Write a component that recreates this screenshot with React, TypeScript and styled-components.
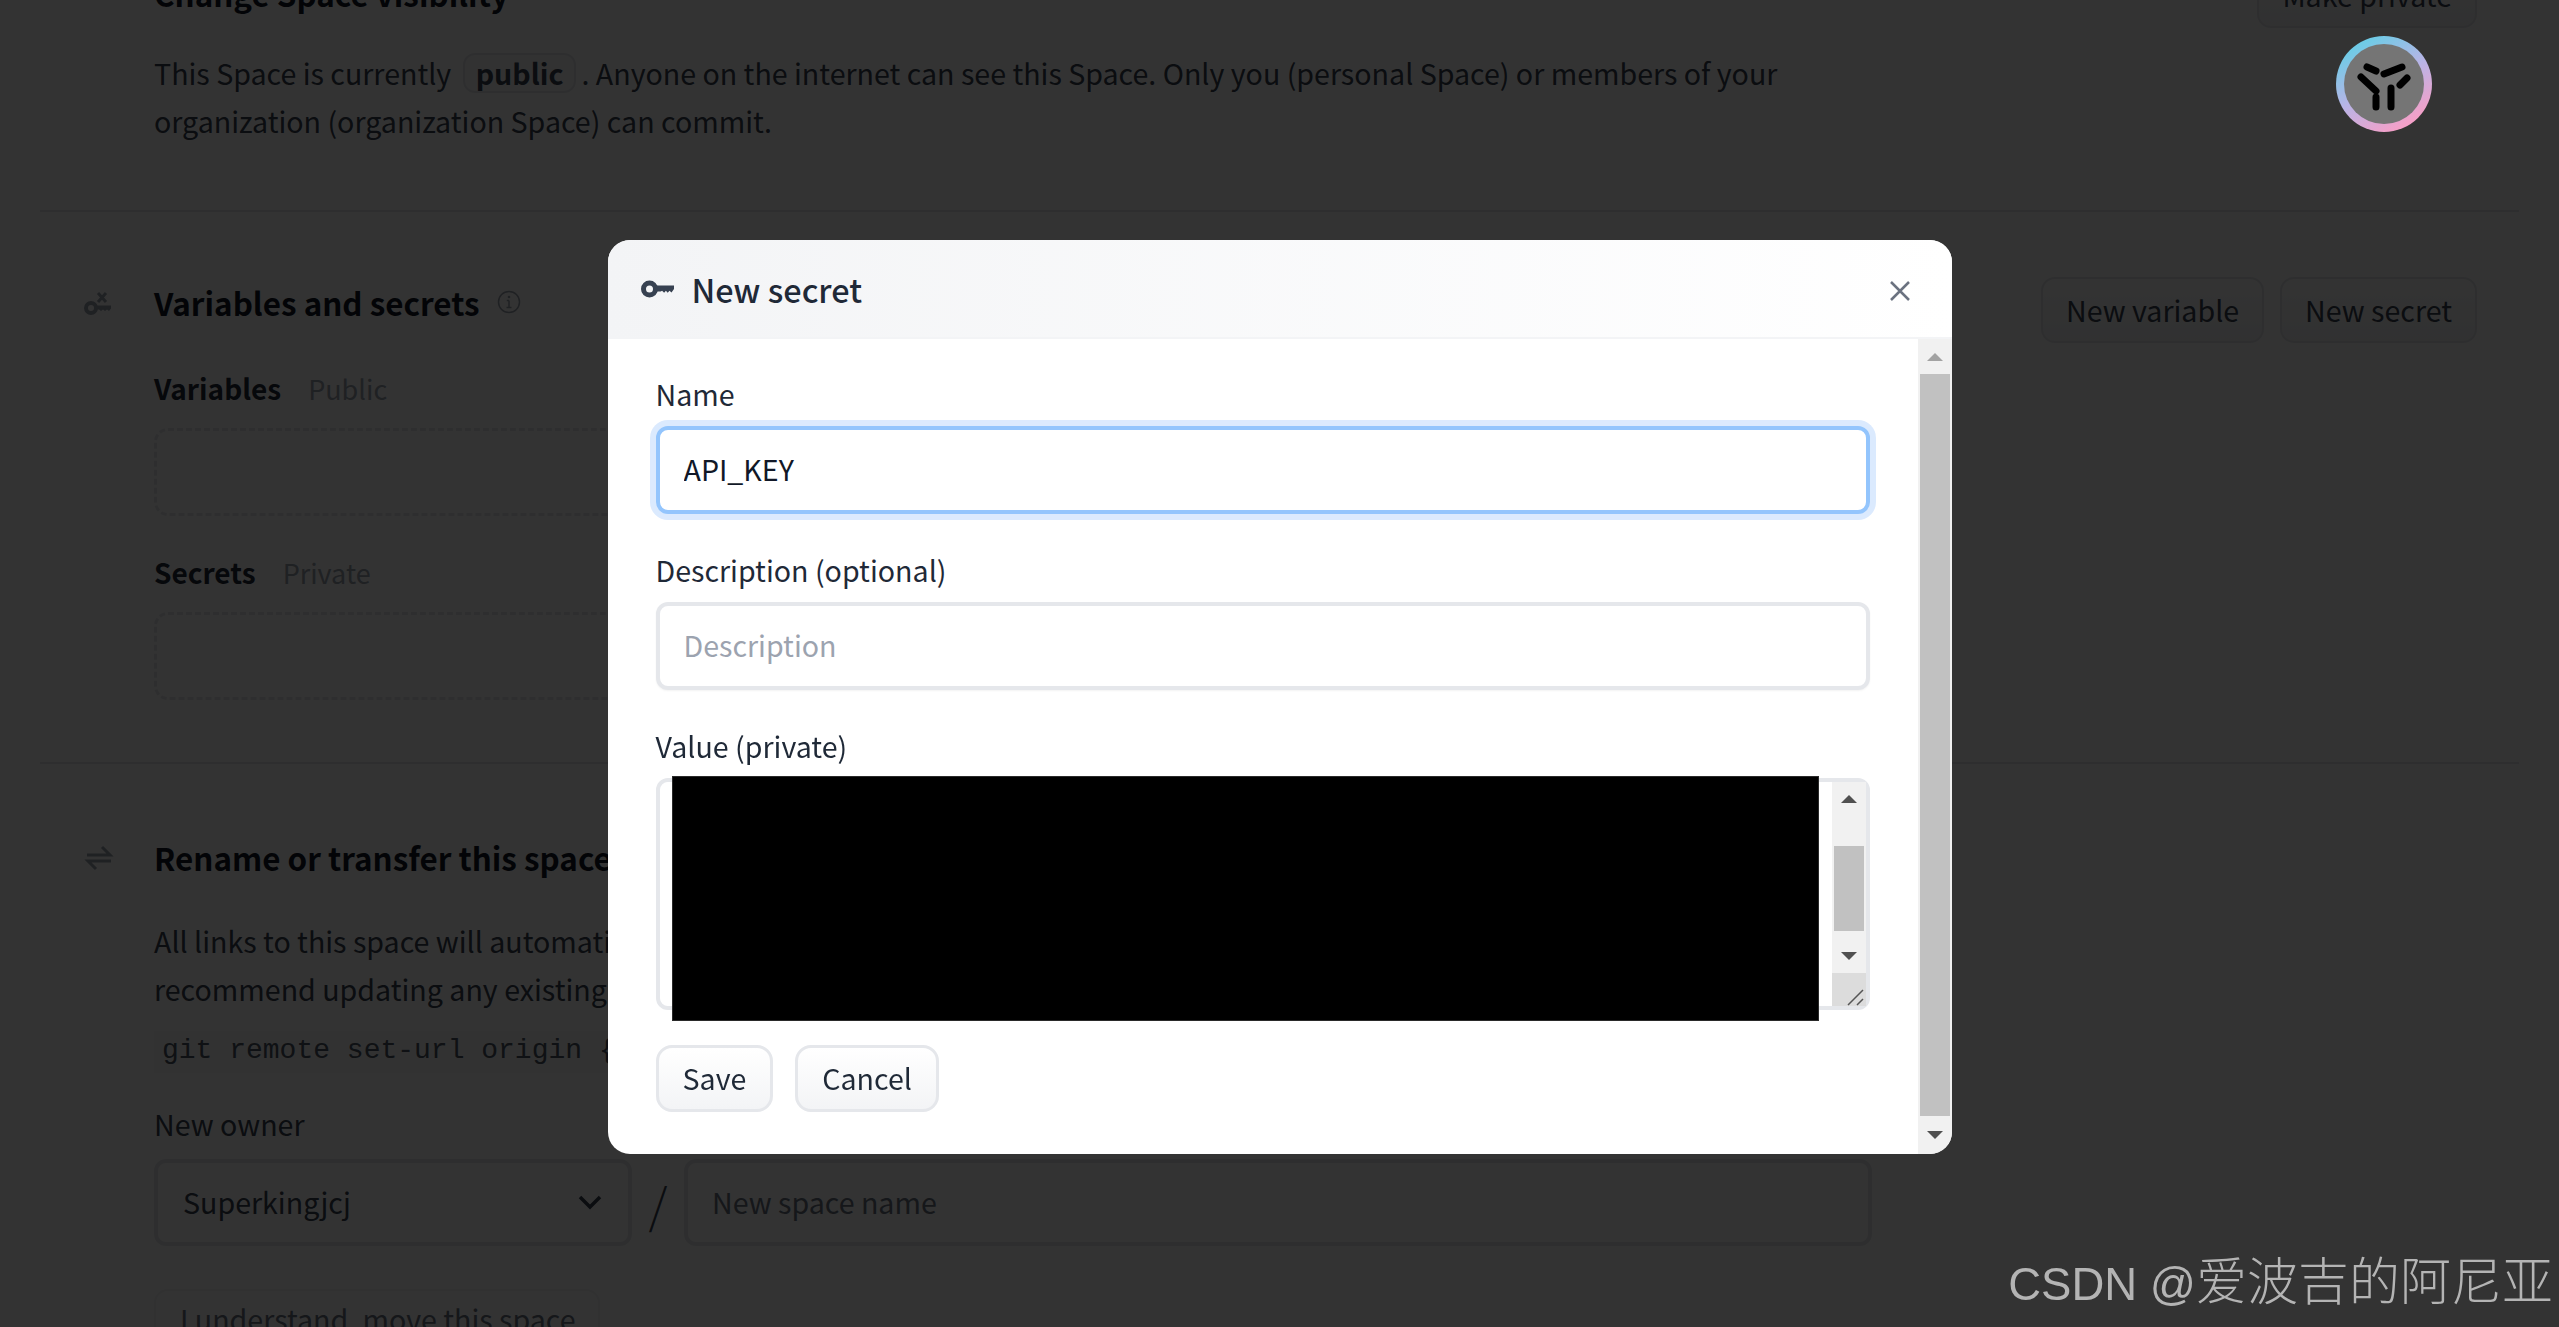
import React from 'react'
import styled, { createGlobalStyle } from 'styled-components'

const SANS = `"Noto Sans CJK SC", "Noto Sans", sans-serif`

const GlobalStyle = createGlobalStyle`
  html, body {
    margin: 0;
    padding: 0;
    height: 100%;
    overflow: hidden;
    background: #ffffff;
    font-family: ${SANS};
  }
  * { box-sizing: border-box; }
`

const KeyIcon = () => (
  <KeySvg viewBox="0 0 33 20">
    <circle cx="8.500" cy="10" r="6" fill="none" stroke="currentColor" strokeWidth="5" />
    <path d="M14 6.500h19v3.500l-2.500 3.500-2-1.800-1.800 2-1.800-2-1.800 2-2-2-1.500.8H14z" fill="currentColor" />
  </KeySvg>
)

const App: React.FC = () => {
  return (
    <>
      <GlobalStyle />
      <Page>
        <Section $height={212}>
          <SectionIcon />
          <SectionMain>
            <TopHeading>Change Space visibility</TopHeading>
            <Paragraph>
              This Space is currently <Pill>public</Pill>. Anyone on the internet can see this Space. Only you (personal
              Space) or members of your organization (organization Space) can commit.
            </Paragraph>
          </SectionMain>
          <TopAction>
            <GhostButton>Make private</GhostButton>
          </TopAction>
        </Section>

        <Section $height={552}>
          <SectionIcon>
            <svg width="27" height="24" viewBox="0 0 27 24" fill="none">
              <circle cx="7" cy="16" r="5" stroke="currentColor" strokeWidth="4" />
              <path d="M12 13.500h15v3l-2 2.500-2-1.500-2 1.500-2-1.500-2 1.500-2-1.500-3 0z" fill="currentColor" />
              <path d="M14 1l8 9M22 1l-8 9" stroke="currentColor" strokeWidth="3" />
            </svg>
          </SectionIcon>
          <SectionMain>
            <HeadingRow>
              <Heading>Variables and secrets</Heading>
              <InfoIcon viewBox="0 0 24 24" fill="none">
                <circle cx="12" cy="12" r="10.500" stroke="currentColor" strokeWidth="1.500" />
                <path d="M12 10.500v7M9.500 17.500h5M9.800 10.500H12" stroke="currentColor" strokeWidth="1.500" />
                <circle cx="12" cy="7" r="1.300" fill="currentColor" />
              </InfoIcon>
            </HeadingRow>
            <SubRow>
              <SubTitle>Variables</SubTitle>
              <SubHint>Public</SubHint>
            </SubRow>
            <DashedBox />
            <SubRow $second>
              <SubTitle>Secrets</SubTitle>
              <SubHint>Private</SubHint>
            </SubRow>
            <DashedBox />
          </SectionMain>
          <SectionActions>
            <GhostButton>New variable</GhostButton>
            <GhostButton>New secret</GhostButton>
          </SectionActions>
        </Section>

        <Section $height={600} $plain>
          <SectionIcon>
            <svg width="30" height="28" viewBox="0 0 30 28" fill="none" stroke="currentColor" strokeWidth="3">
              <path d="M3 11h23L18 3M27 17H4l8 8" />
            </svg>
          </SectionIcon>
          <SectionMain>
            <RenameHeading>Rename or transfer this space</RenameHeading>
            <Paragraph $spaced>
              All links to this space will automatically redirect to the new location, including git operations. However, we
              <br />
              recommend updating any existing local clones to point to the new repository URL. To do so, you can use the
              following command:
            </Paragraph>
            <CodeLine>git remote set-url origin {'{NEW_URL}'}</CodeLine>
            <OwnerLabel>New owner</OwnerLabel>
            <OwnerRow>
              <OwnerSelect>
                <span>Superkingjcj</span>
                <svg width="26" height="16" viewBox="0 0 26 16" fill="none" stroke="currentColor" strokeWidth="3.500">
                  <path d="M3 3l10 10L23 3" />
                </svg>
              </OwnerSelect>
              <Slash>/</Slash>
              <SpaceNameInput placeholder="New space name" readOnly />
            </OwnerRow>
            <MoveButton>I understand, move this space</MoveButton>
          </SectionMain>
        </Section>
      </Page>

      <Overlay>
        <Dialog>
          <DialogHeader>
            <DialogTitle>
              <KeyIcon />
              New secret
            </DialogTitle>
            <CloseButton aria-label="Close">
              <svg width="20" height="20" viewBox="0 0 20 20" fill="none" stroke="currentColor" strokeWidth="2.500">
                <path d="M1 1l18 18M19 1L1 19" />
              </svg>
            </CloseButton>
          </DialogHeader>
          <DialogBody>
            <Form>
              <Field>
                <FieldLabel>Name</FieldLabel>
                <TextInput $focused defaultValue="API_KEY" />
              </Field>
              <Field>
                <FieldLabel>Description (optional)</FieldLabel>
                <TextInput placeholder="Description" />
              </Field>
              <Field>
                <FieldLabel>Value (private)</FieldLabel>
                <TextareaBox>
                  <ValueArea readOnly />
                  <TextareaScroll>
                    <ArrowSlot>
                      <ArrowUp />
                    </ArrowSlot>
                    <TextareaThumb />
                    <ArrowSlot>
                      <ArrowDown />
                    </ArrowSlot>
                    <Resizer>
                      <svg width="18" height="18" viewBox="0 0 18 18" stroke="#555" strokeWidth="1.500">
                        <path d="M1 17L16 2M10 17l6-6" />
                      </svg>
                    </Resizer>
                  </TextareaScroll>
                  <Redaction />
                </TextareaBox>
              </Field>
              <Actions>
                <DialogButton>Save</DialogButton>
                <DialogButton>Cancel</DialogButton>
              </Actions>
            </Form>
            <DialogScroll>
              <ArrowSlot $top>
                <ArrowUp $muted />
              </ArrowSlot>
              <DialogThumb />
              <ArrowSlot $grow>
                <ArrowDown />
              </ArrowSlot>
            </DialogScroll>
          </DialogBody>
        </Dialog>
      </Overlay>

      <Avatar>
        <AvatarInner>
          <svg width="80" height="80" viewBox="8 8 80 80" fill="none" stroke="#000" strokeWidth="7" strokeLinecap="round">
            <path d="M31 31l9 4M48 38l18-7M64 49l7-7M25 41l15 14M40 61v10M55 52v19" />
          </svg>
        </AvatarInner>
      </Avatar>

      <Watermark>
        CSDN @<WatermarkCjk>爱波吉的阿尼亚</WatermarkCjk>
      </Watermark>
    </>
  )
}

export default App

const Page = styled.div`
  height: 1327px;
  overflow: hidden;
  padding: 0 40px;
  color: #374151;
`

const Section = styled.section<{ $height: number; $plain?: boolean }>`
  height: ${p => p.$height}px;
  display: flex;
  border-bottom: ${p => (p.$plain ? 'none' : '2px solid #e5e7eb')};
`

const SectionIcon = styled.div`
  width: 114px;
  flex: none;
  padding: 80px 0 0 44px;
  color: #9ca3af;
`

const SectionMain = styled.div`
  width: 1718px;
  flex: none;
`

const TopHeading = styled.h2`
  margin: -22px 0 0;
  height: 32px;
  font-size: 31.400px;
  line-height: 32px;
  font-weight: 700;
  color: #111827;
`

const Paragraph = styled.p<{ $spaced?: boolean }>`
  margin: ${p => (p.$spaced ? '35px 0 0' : '39px 0 0')};
  font-size: 28.600px;
  line-height: 48px;
  color: #374151;
`

const Pill = styled.span`
  display: inline-block;
  margin: 0 5px;
  padding: 0 11px;
  height: 40px;
  line-height: 36px;
  border-radius: 12px;
  border: 2px solid #e5e7eb;
  background: #f9fafb;
  font-weight: 700;
  color: #374151;
`

const TopAction = styled.div`
  margin-left: auto;
  margin-right: 42px;
  margin-top: -38px;
`

const GhostButton = styled.div`
  height: 66px;
  padding: 0 23px 2px;
  display: flex;
  align-items: center;
  font-size: 28.600px;
  color: #374151;
  background: linear-gradient(#ffffff, #f3f4f6);
  border: 2px solid #e5e7eb;
  border-radius: 14px;
`

const SectionActions = styled.div`
  margin-left: auto;
  margin-right: 42px;
  margin-top: 65px;
  display: flex;
  gap: 16px;
  align-items: flex-start;
`

const HeadingRow = styled.div`
  margin-top: 66px;
  height: 48px;
  display: flex;
  align-items: center;
  gap: 17px;
`

const Heading = styled.h2`
  margin: 0;
  font-size: 31.400px;
  font-weight: 700;
  color: #111827;
`

const RenameHeading = styled(Heading)`
  margin-top: 70px;
  line-height: 48px;
`

const InfoIcon = styled.svg`
  width: 24px;
  height: 24px;
  color: #9ca3af;
`

const SubRow = styled.div<{ $second?: boolean }>`
  margin-top: ${p => (p.$second ? '35px' : '41px')};
  height: 42px;
  display: flex;
  align-items: center;
  gap: 27px;
`

const SubTitle = styled.span`
  font-size: 28px;
  font-weight: 700;
  color: #1f2937;
`

const SubHint = styled.span`
  font-size: 27px;
  color: #9ca3af;
`

const DashedBox = styled.div`
  margin-top: 19px;
  height: 88px;
  border: 3px dashed #e5e7eb;
  border-radius: 14px;
`

const CodeLine = styled.div`
  margin-top: 18px;
  height: 42px;
  line-height: 40px;
  padding-left: 8px;
  font-family: "Liberation Mono", monospace;
  font-size: 28px;
  color: #4b5563;
  background: #f9fafb;
`

const OwnerLabel = styled.div`
  margin-top: 26px;
  height: 50px;
  line-height: 50px;
  font-size: 28.600px;
  color: #374151;
`

const OwnerRow = styled.div`
  margin-top: 10px;
  display: flex;
  align-items: center;
`

const OwnerSelect = styled.div`
  width: 478px;
  height: 87px;
  padding: 0 25px 2px;
  display: flex;
  align-items: center;
  justify-content: space-between;
  font-size: 28.600px;
  color: #374151;
  background: #ffffff;
  border: 4px solid #e5e7eb;
  border-radius: 12px;
`

const Slash = styled.div`
  width: 52px;
  text-align: center;
  font-size: 48px;
  font-weight: 300;
  color: #374151;
`

const SpaceNameInput = styled.input`
  flex: 1;
  height: 87px;
  padding: 0 24px 3px;
  font-family: ${SANS};
  font-size: 28.600px;
  background: #ffffff;
  border: 4px solid #e5e7eb;
  border-radius: 12px;
  outline: none;
  &::placeholder { color: #6b7280; }
`

const MoveButton = styled.div`
  margin-top: 43px;
  width: 446px;
  height: 70px;
  padding-left: 24px;
  line-height: 56px;
  font-size: 28.600px;
  white-space: nowrap;
  color: #6b7280;
  border: 2px solid #f3f4f6;
  border-radius: 14px;
`

const Overlay = styled.div`
  position: fixed;
  inset: 0;
  display: flex;
  justify-content: center;
  align-items: flex-start;
  padding-top: 240px;
  background: rgba(0, 0, 0, 0.8);
`

const Dialog = styled.div`
  width: 1344px;
  height: 914px;
  display: flex;
  flex-direction: column;
  background: #ffffff;
  border-radius: 22px;
  overflow: hidden;
`

const DialogHeader = styled.div`
  height: 99px;
  flex: none;
  padding: 0 30px 0 33px;
  display: flex;
  align-items: center;
  justify-content: space-between;
  background: linear-gradient(to right, #f3f4f6, #ffffff);
  border-bottom: 2px solid #f3f4f6;
`

const DialogTitle = styled.h3`
  margin: 0;
  display: flex;
  align-items: center;
  gap: 18px;
  font-size: 32.400px;
  font-weight: 500;
  color: #1f2937;
`

const KeySvg = styled.svg`
  width: 33px;
  height: 20px;
  color: #374151;
`

const CloseButton = styled.button`
  margin-right: 12px;
  margin-top: 4px;
  padding: 0;
  display: flex;
  border: none;
  background: none;
  color: #6b7280;
`

const DialogBody = styled.div`
  flex: 1;
  min-height: 0;
  display: flex;
`

const Form = styled.div`
  flex: 1;
  padding: 34px 48px 0 48px;
`

const Field = styled.div`
  margin-bottom: 35px;
  &:last-of-type {
    margin-bottom: 32px;
  }
`

const FieldLabel = styled.label`
  display: block;
  height: 42px;
  line-height: 42px;
  margin-bottom: 11px;
  font-size: 28.600px;
  color: #1f2937;
`

const TextInput = styled.input<{ $focused?: boolean }>`
  display: block;
  width: 100%;
  height: 88px;
  padding: 0 24px 3px;
  font-family: ${SANS};
  font-size: 28.600px;
  color: #111827;
  background: #ffffff;
  border: 4px solid ${p => (p.$focused ? '#93c5fd' : '#e5e7eb')};
  border-radius: 12px;
  outline: none;
  box-shadow: ${p => (p.$focused ? '0 0 0 6px #dbeafe' : '0 1px 2px rgba(0, 0, 0, 0.05)')};
  &::placeholder { color: #9ca3af; }
`

const TextareaBox = styled.div`
  position: relative;
  height: 232px;
  display: flex;
  border: 4px solid #e5e7eb;
  border-radius: 12px;
  overflow: visible;
`

const ValueArea = styled.textarea`
  flex: 1;
  border: none;
  outline: none;
  resize: none;
  background: #ffffff;
  border-radius: 10px 0 0 10px;
`

const TextareaScroll = styled.div`
  width: 34px;
  flex: none;
  display: flex;
  flex-direction: column;
  align-items: center;
  background: #f1f1f1;
`

const ArrowSlot = styled.div<{ $top?: boolean; $grow?: boolean }>`
  width: 100%;
  height: ${p => (p.$top ? '35px' : '34px')};
  flex: ${p => (p.$grow ? '1' : 'none')};
  display: flex;
  align-items: center;
  justify-content: center;
`

const ArrowUp = styled.div<{ $muted?: boolean }>`
  width: 0;
  height: 0;
  border-left: 8px solid transparent;
  border-right: 8px solid transparent;
  border-bottom: 8px solid ${p => (p.$muted ? '#a3a3a3' : '#505050')};
`

const ArrowDown = styled.div`
  width: 0;
  height: 0;
  border-left: 8px solid transparent;
  border-right: 8px solid transparent;
  border-top: 8px solid #505050;
`

const TextareaThumb = styled.div`
  width: 30px;
  height: 85px;
  margin-top: 30px;
  margin-bottom: 8px;
  background: #c1c1c1;
`

const Resizer = styled.div`
  width: 100%;
  flex: 1;
  display: flex;
  align-items: flex-end;
  justify-content: flex-end;
  padding: 0 1px 0 0;
  background: #dcdcdc;
`

const Redaction = styled.div`
  position: absolute;
  left: 12px;
  top: -6px;
  width: 1147px;
  height: 245px;
  background: #000000;
  border: 1px solid #2a2a2a;
`

const Actions = styled.div`
  display: flex;
  gap: 22px;
`

const DialogButton = styled.button`
  height: 67px;
  padding: 0 24px 2px;
  font-family: ${SANS};
  font-size: 28.600px;
  color: #1f2937;
  background: linear-gradient(#ffffff, #f3f4f6);
  border: 3px solid #e5e7eb;
  border-radius: 16px;
`

const DialogScroll = styled.div`
  width: 34px;
  flex: none;
  display: flex;
  flex-direction: column;
  align-items: center;
  background: #f1f1f1;
`

const DialogThumb = styled.div`
  width: 30px;
  height: 742px;
  flex: none;
  background: #c1c1c1;
`

const Avatar = styled.div`
  position: fixed;
  left: 2336px;
  top: 36px;
  width: 96px;
  height: 96px;
  padding: 8px;
  border-radius: 50%;
  background: linear-gradient(150deg, #6fcbe6 15%, #b9b4e6 50%, #f4a0c8 85%);
`

const AvatarInner = styled.div`
  width: 80px;
  height: 80px;
  border-radius: 50%;
  background: #757575;
`

const Watermark = styled.div`
  position: fixed;
  right: 6px;
  top: 1246px;
  font-family: "Liberation Sans", "Noto Sans CJK SC", sans-serif;
  font-size: 45.500px;
  line-height: 64px;
  color: #b4b4b4;
  white-space: nowrap;
`

const WatermarkCjk = styled.span`
  font-family: "Noto Sans CJK SC", sans-serif;
  font-size: 51px;
  font-weight: 300;
`
